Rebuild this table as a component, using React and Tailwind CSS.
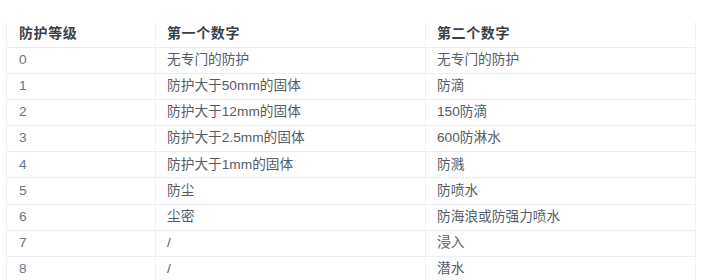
const rows = [
  ['0', '无专门的防护', '无专门的防护'],
  ['1', '防护大于50mm的固体', '防滴'],
  ['2', '防护大于12mm的固体', '150防滴'],
  ['3', '防护大于2.5mm的固体', '600防淋水'],
  ['4', '防护大于1mm的固体', '防溅'],
  ['5', '防尘', '防喷水'],
  ['6', '尘密', '防海浪或防强力喷水'],
  ['7', '/', '浸入'],
  ['8', '/', '潜水'],
]

export default function App() {
  return (
    <div className="w-[704px] h-[280px] overflow-hidden bg-white pt-[22px] pl-[6px] font-['Liberation_Sans','Noto_Sans_CJK_SC',sans-serif] text-[13.7px]">
      <table className="w-[689px] border-collapse table-fixed">
        <colgroup>
          <col className="w-[149px]" />
          <col className="w-[270px]" />
          <col className="w-[270px]" />
        </colgroup>
        <thead>
          <tr className="h-[25px] border-b border-[#e8eef4]">
            <th className="border-x border-[#eef2f6] pl-[12px] text-left font-bold text-[14px] tracking-[0.6px] text-[#3a3f46] align-middle pb-[1px]">防护等级</th>
            <th className="border-x border-[#eef2f6] pl-[11px] text-left font-bold text-[14px] tracking-[0.6px] text-[#3a3f46] align-middle pb-[1px]">第一个数字</th>
            <th className="border-x border-[#eef2f6] pl-[11px] text-left font-bold text-[14px] tracking-[0.6px] text-[#3a3f46] align-middle pb-[1px]">第二个数字</th>
          </tr>
        </thead>
        <tbody>
          {rows.map((r) => (
            <tr key={r[0]} className="h-[26.2px] border-b border-[#e8eef4]">
              <td className="border-x border-[#eef2f6] pl-[12px] text-[#6a7686] align-middle">{r[0]}</td>
              <td className="border-x border-[#eef2f6] pl-[11px] text-[#555d69] align-middle">{r[1]}</td>
              <td className="border-x border-[#eef2f6] pl-[11px] text-[#555d69] align-middle">{r[2]}</td>
            </tr>
          ))}
        </tbody>
      </table>
    </div>
  )
}
